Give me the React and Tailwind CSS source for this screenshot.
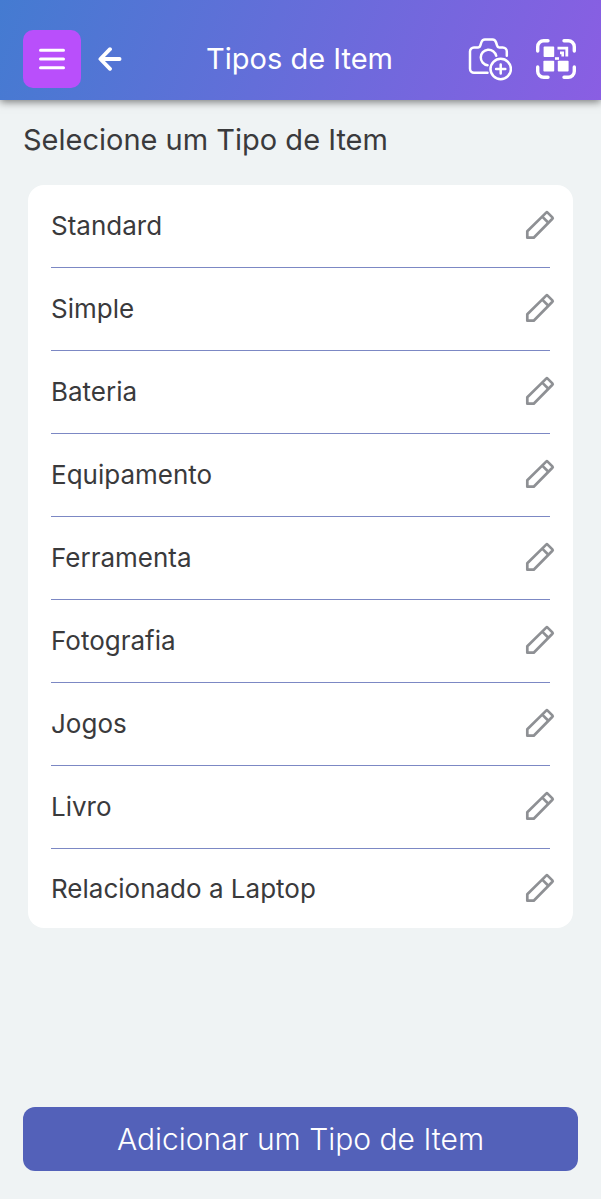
import React from 'react'

const itemTypes = [
  'Standard',
  'Simple',
  'Bateria',
  'Equipamento',
  'Ferramenta',
  'Fotografia',
  'Jogos',
  'Livro',
  'Relacionado a Laptop',
]

const MenuIcon = () => (
  <svg width="28" height="24" viewBox="0 0 28 24" fill="none" stroke="currentColor" strokeWidth="3" strokeLinecap="round">
    <path d="M2.5 3.3h23M2.5 12h23M2.5 20.7h23" />
  </svg>
)

const BackIcon = () => (
  <svg width="24" height="24" viewBox="0 0 24 24" fill="none" stroke="currentColor" strokeWidth="3.8" strokeLinecap="round" strokeLinejoin="round">
    <path d="M12 2.2 2.4 12 12 21.8M2.8 12h18.8" />
  </svg>
)

const CameraPlusIcon = () => (
  <svg width="44" height="44" viewBox="0 0 44 44" fill="none" stroke="currentColor" strokeWidth="2.5" strokeLinecap="round" strokeLinejoin="round">
    <path d="M19.5 35.8H6a4 4 0 0 1-4-4V14.4a4 4 0 0 1 4-4h4.2c1.2 0 1.8-.6 2.1-1.7l1-3.2c.6-1.9 1.7-3 3.6-3h7.6c1.9 0 3 1.1 3.6 3l1 3.2c.3 1.1.9 1.7 2.1 1.7h3.6a4 4 0 0 1 4 4v4.4" />
    <path d="M19.6 28.2a7.8 7.8 0 1 1 8.6-9.4" />
    <circle cx="32.7" cy="32" r="10.2" />
    <path d="M32.7 27.4v9.2M28.1 32h9.2" />
  </svg>
)

const QrScanIcon = () => (
  <svg width="40" height="40" viewBox="0 0 40 40" fill="none">
    <path
      d="M1.7 12V7.7a6 6 0 0 1 6-6H12M28 1.7h4.3a6 6 0 0 1 6 6V12M38.3 28v4.3a6 6 0 0 1-6 6H28M12 38.3H7.7a6 6 0 0 1-6-6V28"
      stroke="currentColor"
      strokeWidth="3.4"
      strokeLinecap="round"
    />
    <g fill="currentColor">
      <rect x="7.6" y="7.6" width="10.6" height="10.4" rx="0.8" />
      <rect x="7.4" y="21.8" width="10.8" height="10.8" rx="0.8" />
      <rect x="21.8" y="21.8" width="10.8" height="10.8" rx="0.8" />
      <path d="M21.5 7.8h10.7v9.6h-2.8v-6.8h-7.9z" />
      <path d="M24 12.4h4v5h-2.6v-2.2H24z" />
      <rect x="19" y="18.2" width="4" height="2.6" />
    </g>
  </svg>
)

const PencilIcon = () => (
  <svg width="30" height="30" viewBox="0 0 30 30" fill="none" stroke="currentColor" strokeWidth="2.7" strokeLinejoin="round">
    <path d="M2.3 27.7v-6.4L21.2 2.6a1 1 0 0 1 1.4 0l4.8 4.8a1 1 0 0 1 0 1.4L8.7 27.7z" />
    <path d="m17.2 6.6 6.2 6.2" />
  </svg>
)

const Header = () => (
  <header className="grid grid-cols-[1fr_auto_1fr] items-center pl-[23px] pr-[25px] pt-[30px] pb-3 bg-linear-[110deg] from-[#447bd1] to-[#8a5ee3] text-white shadow-[0_2px_8px_rgba(0,0,0,0.5)]">
    <div className="flex items-center gap-[17px]">
      <button aria-label="Menu" className="flex items-center justify-center w-[58px] h-[58px] rounded-[10px] bg-[#b94ffb] cursor-pointer">
        <MenuIcon />
      </button>
      <button aria-label="Voltar" className="cursor-pointer">
        <BackIcon />
      </button>
    </div>
    <h1 className="text-[29px] leading-9">Tipos de Item</h1>
    <div className="flex items-center justify-end gap-6">
      <button aria-label="Adicionar foto" className="cursor-pointer">
        <CameraPlusIcon />
      </button>
      <button aria-label="Ler QR code" className="cursor-pointer">
        <QrScanIcon />
      </button>
    </div>
  </header>
)

const App = () => {
  return (
    <div className="flex flex-col min-h-screen bg-[#eff3f4] text-[#3a3a3c] font-['Inter',sans-serif]">
      <Header />
      <main className="flex flex-col flex-1 px-[23px] pt-[22px] pb-7">
        <h2 className="text-[29px] leading-9">Selecione um Tipo de Item</h2>
        <ul className="mx-[5px] mt-[27px] px-[23px] rounded-2xl bg-white">
          {itemTypes.map((name) => (
            <li
              key={name}
              className="flex items-center justify-between h-[83px] border-b border-[#7c88c4] last:h-[79px] last:border-b-0"
            >
              <span className="text-[26px] leading-8">{name}</span>
              <button aria-label={`Editar ${name}`} className="-mr-[5px] mb-0.5 text-[#8e9094] cursor-pointer">
                <PencilIcon />
              </button>
            </li>
          ))}
        </ul>
        <button className="mt-auto w-full h-16 rounded-xl bg-[#5361b9] text-white text-[30px] leading-9 font-light cursor-pointer">
          Adicionar um Tipo de Item
        </button>
      </main>
    </div>
  )
}

export default App
